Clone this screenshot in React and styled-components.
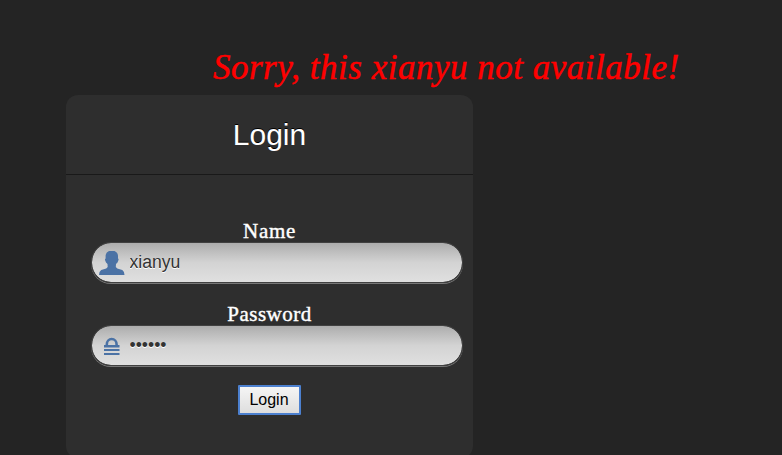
import React from "react";
import styled, { createGlobalStyle } from "styled-components";

const GlobalStyle = createGlobalStyle`
  * { box-sizing: border-box; }
  html, body { margin: 0; background: #242424; overflow: hidden; }
`;

const Page = styled.main`
  height: 455px;
  overflow: hidden;
  padding: 44px 0 0 66px;
  background: #242424;
`;

const Message = styled.p`
  margin: 0 0 0 147px;
  height: 51px;
  white-space: nowrap;
  color: #ff0000;
  font: italic 35px/47px Georgia, "Liberation Serif", serif;
  letter-spacing: 0.5px;
  -webkit-text-stroke: 0.5px #ff0000;
`;

const Panel = styled.section`
  width: 407px;
  height: 363px;
  border-radius: 12px;
  background: #2e2e2e;
`;

const Title = styled.h1`
  margin: 0;
  height: 80px;
  border-bottom: 1px solid #191919;
  color: #fff;
  text-align: center;
  text-shadow: 0 -1px 0 #000;
  font: 400 30px/80px "Liberation Sans", Arial, sans-serif;
`;

const Form = styled.form`
  display: flex;
  flex-direction: column;
  align-items: center;
  padding-top: 43px;
`;

const Field = styled.label`
  display: flex;
  flex-direction: column;
  align-items: center;
  width: 372px;
  height: 83px;
  margin-left: 15px;
`;

const Caption = styled.span`
  height: 24px;
  margin-right: 15px;
  color: #fff;
  font: 400 21px/27px Georgia, "Liberation Serif", serif;
  letter-spacing: ${(p) => p.$tracking};
  -webkit-text-stroke: 0.4px #fff;
`;

const InputBox = styled.span`
  display: flex;
  align-items: center;
  width: 372px;
  height: 41px;
  padding-left: 6px;
  border: 1px solid #414141;
  border-radius: 20px;
  background: linear-gradient(#adadad, #d3d3d3 50%, #e0e0e0);
  background-clip: padding-box;
  box-shadow: 0 1px 0 #777;
`;

const Input = styled.input`
  width: 310px;
  height: 30px;
  margin-left: 4.5px;
  padding: 0;
  border: 0;
  outline: 0;
  background: transparent;
  color: #333;
  text-shadow: 0 1px 0 #fff;
  font: 17.6px "Liberation Sans", Arial, sans-serif;
`;

const LoginButton = styled.button`
  width: 63px;
  height: 30px;
  margin-top: 1px;
  padding: 0 1px 0 0;
  border: 2px solid #4c80cf;
  border-radius: 1px;
  background: linear-gradient(#f5f5f5, #dedede);
  color: #000;
  font: 16px "Liberation Sans", Arial, sans-serif;
`;

function UserIcon() {
  return (
    <svg width="27" height="27" viewBox="0 0 27 27" fill="#4b72a5">
      <path d="M11 2h5.500q3.500 1.500 3.500 5v2.500q.8.300.5 1.500l-1 2.500-1.500 1.500-.2 3 1.500 1.500 5 1.500q2.200 1.300 2.200 5H1q0-3.700 2.200-5l5-1.500 1.500-1.500-.2-3-1.500-1.500-1-2.500q-.2-1.200.600-1.500V7q0-2 1.200-3.500z" />
    </svg>
  );
}

function LockIcon() {
  return (
    <svg width="27" height="27" viewBox="0 0 27 27" fill="#4b72a5">
      <path d="M8.800 13.500v-1a4.900 5.500 0 0 1 9.800 0v1" fill="none" stroke="#4b72a5" strokeWidth="2.600" />
      <path d="M6 13h15.500v2.500H6zM6 17h15.500v2H6zM6 21h15.500v2H6z" />
    </svg>
  );
}

export default function App() {
  return (
    <Page>
      <GlobalStyle />
      <Message>Sorry, this xianyu not available!</Message>
      <Panel>
        <Title>Login</Title>
        <Form onSubmit={(e) => e.preventDefault()}>
          <Field>
            <Caption $tracking="0.7px">Name</Caption>
            <InputBox>
              <UserIcon />
              <Input type="text" defaultValue="xianyu" />
            </InputBox>
          </Field>
          <Field>
            <Caption $tracking="0.5px">Password</Caption>
            <InputBox>
              <LockIcon />
              <Input type="password" defaultValue="xianyu" />
            </InputBox>
          </Field>
          <LoginButton type="submit">Login</LoginButton>
        </Form>
      </Panel>
    </Page>
  );
}
